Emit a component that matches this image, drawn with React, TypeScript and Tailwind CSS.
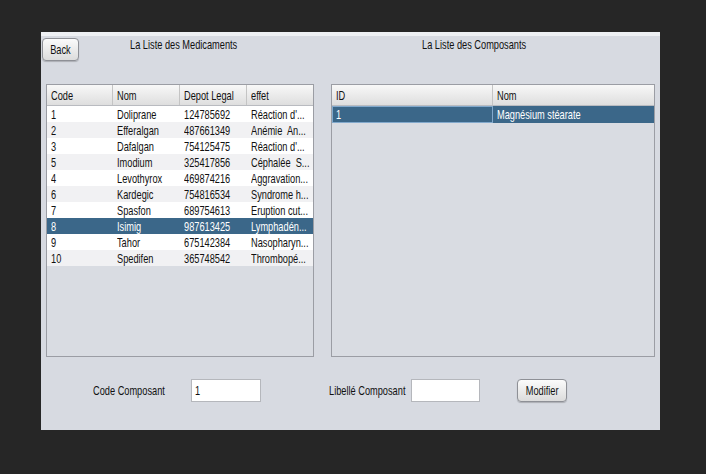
import React from 'react';

const meds = [
  ['1', 'Doliprane', '124785692', "Réaction d'..."],
  ['2', 'Efferalgan', '487661349', 'Anémie  An...'],
  ['3', 'Dafalgan', '754125475', "Réaction d'..."],
  ['5', 'Imodium', '325417856', 'Céphalée  S...'],
  ['4', 'Levothyrox', '469874216', 'Aggravation...'],
  ['6', 'Kardegic', '754816534', 'Syndrome h...'],
  ['7', 'Spasfon', '689754613', 'Eruption cut...'],
  ['8', 'Isimig', '987613425', 'Lymphadén...'],
  ['9', 'Tahor', '675142384', 'Nasopharyn...'],
  ['10', 'Spedifen', '365748542', 'Thrombopé...'],
];

// the screenshot font is a narrow face; squeeze Liberation Sans to its width
function T({ children, center }: { children: React.ReactNode; center?: boolean }) {
  return (
    <span
      className={`inline-block whitespace-pre scale-x-[0.71] ${center ? 'origin-center' : 'origin-left'}`}
    >
      {children}
    </span>
  );
}

function HeaderCell({ label, last }: { label: string; last?: boolean }) {
  return (
    <div
      className={`h-full pl-[4px] flex items-center overflow-hidden bg-gradient-to-b from-[#f8f8f8] to-[#dedede] ${
        last ? '' : 'border-r border-[#c4c4c4]'
      }`}
    >
      <T>{label}</T>
    </div>
  );
}

export default function App() {
  return (
    <div className="w-[706px] h-[474px] bg-[#262626] pt-[32px] pl-[41px] text-[13px] leading-[15px] text-[#111] font-['Liberation_Sans',Arial,sans-serif]">
      <div className="w-[619px] h-[398px] bg-[#d7dae1] border-t-4 border-[#eef0f3] flex flex-col">
        {/* top row */}
        <div className="h-[48px] grid grid-cols-[89px_292px_1fr]">
          <div className="pt-[2px] pl-[1px]">
            <button className="w-[37px] h-[23px] rounded-[4px] border border-[#8e9096] bg-gradient-to-b from-[#fbfbfb] to-[#dcdcdc] shadow-[0_1px_1px_rgba(0,0,0,0.2)] flex items-center justify-center">
              <T center>Back</T>
            </button>
          </div>
          <div className="pt-[1px]">
            <T>La Liste des Medicaments</T>
          </div>
          <div className="pt-[1px]">
            <T>La Liste des Composants</T>
          </div>
        </div>

        {/* tables */}
        <div className="flex">
          <div className="ml-[5px] w-[268px] h-[273px] border border-[#9b9da4] bg-[#d9dce2]">
            <div className="h-[21px] grid grid-cols-[66px_67px_67px_1fr] border-b border-[#b9bbc0]">
              <HeaderCell label="Code" />
              <HeaderCell label="Nom" />
              <HeaderCell label="Depot Legal" />
              <HeaderCell label="effet" last />
            </div>
            {meds.map((m, i) => {
              const sel = i === 7;
              const bg = sel ? 'bg-[#3b6789] text-white' : i % 2 === 0 ? 'bg-white' : 'bg-[#f1f1f3]';
              return (
                <div key={m[0]} className={`h-[16px] grid grid-cols-[66px_67px_67px_1fr] items-center ${bg}`}>
                  {m.map((c, j) => (
                    <div key={j} className="pl-[4px] overflow-hidden">
                      <T>{c}</T>
                    </div>
                  ))}
                </div>
              );
            })}
          </div>

          <div className="ml-[17px] w-[324px] h-[273px] border border-[#9b9da4] bg-[#d9dce2]">
            <div className="h-[21px] grid grid-cols-[161px_1fr] border-b border-[#b9bbc0]">
              <HeaderCell label="ID" />
              <HeaderCell label="Nom" last />
            </div>
            <div className="h-[17px] grid grid-cols-[161px_1fr] items-center bg-[#3b6789] text-white">
              <div className="h-full pl-[3px] flex items-center border border-[#82a9cc]">
                <T>1</T>
              </div>
              <div className="pl-[4px]">
                <T>Magnésium stéarate</T>
              </div>
            </div>
          </div>
        </div>

        {/* bottom form */}
        <div className="mt-[22px] h-[23px] flex items-center">
          <span className="ml-[52px] w-[98px]">
            <T>Code Composant</T>
          </span>
          <div className="w-[70px] h-[23px] bg-white border border-[#b5b7bc] px-[3px] flex items-center">
            <T>1</T>
          </div>
          <span className="ml-[68px] w-[82px]">
            <T>Libellé Composant</T>
          </span>
          <div className="w-[69px] h-[23px] bg-white border border-[#b5b7bc]" />
          <button className="ml-[37px] w-[50px] h-[23px] rounded-[4px] border border-[#8e9096] bg-gradient-to-b from-[#fbfbfb] to-[#dcdcdc] shadow-[0_1px_1px_rgba(0,0,0,0.2)] flex items-center justify-center">
            <T center>Modifier</T>
          </button>
        </div>
      </div>
    </div>
  );
}
